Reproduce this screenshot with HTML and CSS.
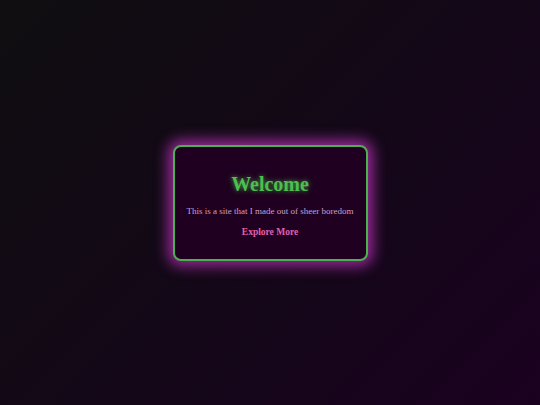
FILE: index.html
```html
<!DOCTYPE html>
<html>
<head>
<meta charset="utf-8">
<link rel="stylesheet" href="styles.css">
</head>
<body>
<div class="card">
  <h1 class="title">Welcome</h1>
  <p class="desc">This is a site that I made out of sheer boredom</p>
  <a class="link" href="#">Explore More</a>
</div>
</body>
</html>
```
FILE: styles.css
```css
html, body {
  margin: 0;
  height: 100%;
}
body {
  background: linear-gradient(135deg, #0f0e10 0%, #130817 50%, #1a0120 100%);
  display: flex;
  align-items: center;
  justify-content: center;
  font-family: "Liberation Serif", "DejaVu Serif", serif;
}
.card {
  width: 191px;
  height: 112px;
  box-sizing: content-box;
  border: 2px solid #4caf50;
  border-radius: 8px;
  background: #200020;
  box-shadow: 0 0 14px 5px rgba(165, 45, 165, 0.9);
  display: flex;
  flex-direction: column;
  align-items: center;
}
.title {
  margin: 26px 0 0;
  font-size: 20px;
  line-height: 22px;
  font-weight: bold;
  color: #4cbf50;
  text-shadow: 0 0 5px rgba(80, 220, 80, 0.7);
}
.desc {
  margin: 10px 0 0;
  font-size: 9px;
  line-height: 12px;
  color: #c8a0cc;
}
.link {
  margin-top: 9px;
  font-size: 9.5px;
  line-height: 12px;
  font-weight: bold;
  color: #e060b0;
  text-decoration: none;
}
```
